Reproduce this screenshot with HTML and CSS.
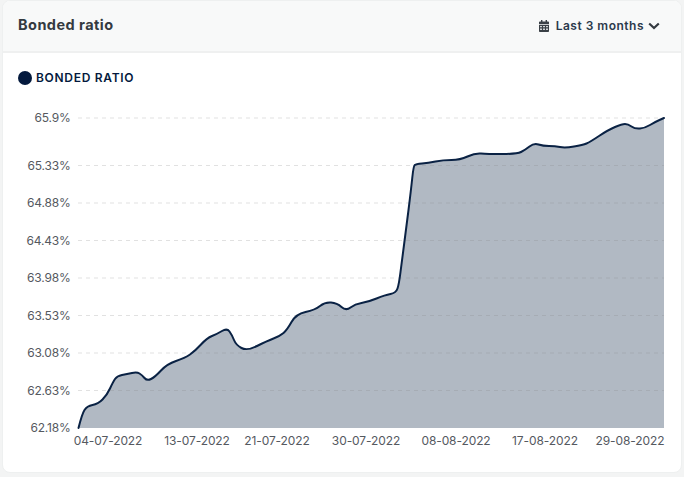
FILE: index.html
```html
<!DOCTYPE html>
<html lang="en">
<head>
<meta charset="utf-8">
<title>Bonded ratio</title>
<link rel="stylesheet" href="styles.css">
</head>
<body>
<section class="card">
  <header class="card-head">
    <h2 class="title">Bonded ratio</h2>
    <div class="range">
      <svg class="cal" viewBox="0 0 10 12" width="10" height="12" aria-hidden="true">
        <path d="M2 0h1.4v1.5h3.2V0H8v1.5h1.2c.45 0 .8.35.8.8V4H0V2.300c0-.45.35-.8.8-.8H2z"/>
        <path fill-rule="evenodd" d="M0 4.700h10v6.500c0 .45-.35.8-.8.8H.8c-.45 0-.8-.35-.8-.8zM1.200 5.900v1.300h1.600V5.900zM4.200 5.900v1.300h1.600V5.900zM7.200 5.900v1.300h1.600V5.900zM1.200 8.600v1.300h1.600V8.600zM4.200 8.600v1.300h1.600V8.600zM7.200 8.600v1.300h1.600V8.600z"/>
      </svg>
      <span class="range-label">Last 3 months</span>
      <svg class="chev" viewBox="0 0 12 8" width="12" height="8" aria-hidden="true">
        <path d="M1.200 1.500 6 6l4.800-4.500"/>
      </svg>
    </div>
  </header>
  <div class="card-body">
    <div class="legend"><span class="dot"></span><span class="legend-label">BONDED RATIO</span></div>
    <svg class="chart" viewBox="2 96 680 376" width="680" height="376" role="img" aria-label="Bonded ratio chart">
      <path class="area" d="M78.5 428 Q82 414 84.500 410 Q87 406 92.500 405 Q98 404 102.500 399.500 Q107 395 110 388.500 Q113 382 115 379 Q117 376 122 375 Q127 374 132 373 Q137 372 139.500 373.500 Q142 375 144.500 378 Q147 381 151 379 Q155 377 161 370.500 Q167 364 176 361 Q185 358 190 354.500 Q195 351 201 344.500 Q207 338 212 336 Q217 334 222 331 Q227 328 229.500 331.500 Q232 335 234 340 Q236 345 241.500 348 Q247 351 257 346 Q267 341 273.500 338.500 Q280 336 283.500 333 Q287 330 291.500 322 Q296 314 305.500 312 Q315 310 320 306 Q325 302 331 302.500 Q337 303 341.500 307 Q346 311 350.500 307.500 Q355 304 361.500 303 Q368 302 376.500 298.500 Q385 295 390.500 294 Q396 293 397.500 288.500 Q399 284 400.500 272 Q402 260 404 245 Q406 230 408.500 210 Q411 190 412.250 178 Q413.500 166 414.750 165 Q416 164 422 163.500 Q428 163 435.500 161.500 Q443 160 451.500 160 Q460 160 467.500 156.500 Q475 153 481 153.500 Q487 154 502 154 Q517 154 521 152 Q525 150 529.500 146.500 Q534 143 538.500 144.500 Q543 146 549 146 Q555 146 560 147 Q565 148 574 146.500 Q583 145 586.500 143.500 Q590 142 599 136 Q608 130 615 127 Q622 124 625 124 Q628 124 631.500 126.500 Q635 129 640 128.500 Q645 128 650 125 Q655 122 659.500 120 L664 118 L664 428 Z"/>
      <g class="grid">
        <line x1="78" x2="664" y1="118" y2="118"/>
        <line x1="78" x2="664" y1="165.500" y2="165.500"/>
        <line x1="78" x2="664" y1="203" y2="203"/>
        <line x1="78" x2="664" y1="240.500" y2="240.500"/>
        <line x1="78" x2="664" y1="278" y2="278"/>
        <line x1="78" x2="664" y1="315.500" y2="315.500"/>
        <line x1="78" x2="664" y1="353" y2="353"/>
        <line x1="78" x2="664" y1="390.500" y2="390.500"/>
      </g>
      <path class="line" d="M78.5 428 Q82 414 84.500 410 Q87 406 92.500 405 Q98 404 102.500 399.500 Q107 395 110 388.500 Q113 382 115 379 Q117 376 122 375 Q127 374 132 373 Q137 372 139.500 373.500 Q142 375 144.500 378 Q147 381 151 379 Q155 377 161 370.500 Q167 364 176 361 Q185 358 190 354.500 Q195 351 201 344.500 Q207 338 212 336 Q217 334 222 331 Q227 328 229.500 331.500 Q232 335 234 340 Q236 345 241.500 348 Q247 351 257 346 Q267 341 273.500 338.500 Q280 336 283.500 333 Q287 330 291.500 322 Q296 314 305.500 312 Q315 310 320 306 Q325 302 331 302.500 Q337 303 341.500 307 Q346 311 350.500 307.500 Q355 304 361.500 303 Q368 302 376.500 298.500 Q385 295 390.500 294 Q396 293 397.500 288.500 Q399 284 400.500 272 Q402 260 404 245 Q406 230 408.500 210 Q411 190 412.250 178 Q413.500 166 414.750 165 Q416 164 422 163.500 Q428 163 435.500 161.500 Q443 160 451.500 160 Q460 160 467.500 156.500 Q475 153 481 153.500 Q487 154 502 154 Q517 154 521 152 Q525 150 529.500 146.500 Q534 143 538.500 144.500 Q543 146 549 146 Q555 146 560 147 Q565 148 574 146.500 Q583 145 586.500 143.500 Q590 142 599 136 Q608 130 615 127 Q622 124 625 124 Q628 124 631.500 126.500 Q635 129 640 128.500 Q645 128 650 125 Q655 122 659.500 120 L664 118"/>
      <g class="y-labels">
        <text x="70.500" y="122">65.9%</text>
        <text x="70.500" y="170">65.33%</text>
        <text x="70.500" y="207">64.88%</text>
        <text x="70.500" y="245">64.43%</text>
        <text x="70.500" y="282">63.98%</text>
        <text x="70.500" y="320">63.53%</text>
        <text x="70.500" y="357">63.08%</text>
        <text x="70.500" y="395">62.63%</text>
        <text x="70.500" y="432">62.18%</text>
      </g>
      <g class="x-labels">
        <text x="108" y="445">04-07-2022</text>
        <text x="197" y="445">13-07-2022</text>
        <text x="277" y="445">21-07-2022</text>
        <text x="366" y="445">30-07-2022</text>
        <text x="456" y="445">08-08-2022</text>
        <text x="545" y="445">17-08-2022</text>
        <text x="630" y="445">29-08-2022</text>
      </g>
    </svg>
  </div>
</section>
</body>
</html>
```
FILE: styles.css
```css
* { box-sizing: border-box; }
html, body { margin: 0; background: #f3f4f4; }
body { padding: 0 2px 2px; width: 684px; height: 477px; overflow: hidden; font-family: Inter, "Liberation Sans", sans-serif; }
.card { height: 473px; background: #fff; border: 1px solid #eef0f0; border-radius: 8px; overflow: hidden; }
.card-head { height: 52px; display: flex; align-items: center; justify-content: space-between; padding: 0 21px 4px 15px; background: #f8f9f9; border-bottom: 2px solid #eff0f0; }
.title { margin: 0; font-size: 14.500px; font-weight: 700; letter-spacing: .45px; color: #343a40; }
.range { display: flex; align-items: center; margin-top: 3px; color: #343a40; }
.cal { fill: #3a4046; margin-right: 7px; }
.range-label { font-size: 12px; font-weight: 600; letter-spacing: .5px; color: #2b3a4c; margin-right: 4px; }
.chev { fill: none; stroke: #343a40; stroke-width: 2.200; }
.card-body { display: flex; flex-direction: column; }
.legend { height: 43px; display: flex; align-items: center; padding: 5px 0 0 15px; }
.dot { width: 14px; height: 14px; border-radius: 50%; background: #03193d; margin: 1px 4px 0 0; }
.legend-label { font-size: 12px; font-weight: 600; letter-spacing: .7px; color: #03193d; }
.chart { display: block; margin-left: -1px; }
.area { fill: #b1b9c3; }
.line { fill: none; stroke: #0a2244; stroke-width: 2; stroke-linejoin: round; stroke-linecap: round; }
.grid line { stroke: #888; stroke-opacity: .25; stroke-dasharray: 4 4; stroke-width: 1; }
.y-labels text { font-size: 12px; letter-spacing: -.2px; fill: #55595f; text-anchor: end; }
.x-labels text { font-size: 12px; letter-spacing: -.1px; fill: #55595f; text-anchor: middle; }
```
